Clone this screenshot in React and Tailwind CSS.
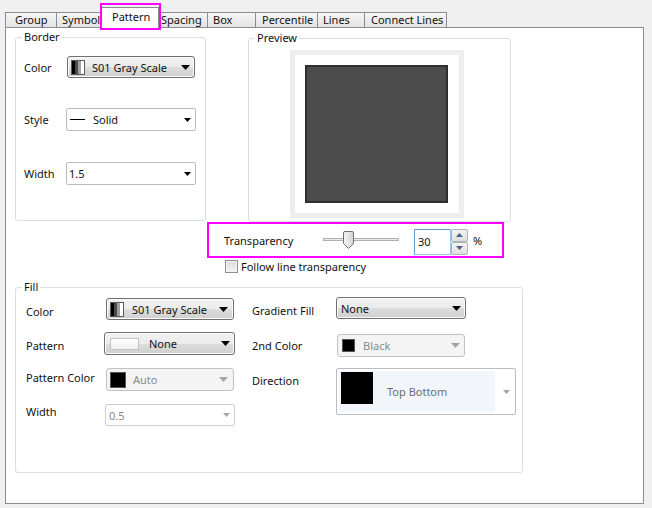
import React from "react"

const tabs = [
    { label: "Group", w: "w-[52px]", pl: "pl-[9px]" },
    { label: "Symbol", w: "w-[46px]", pl: "pl-[5px]" },
    { label: "Pattern", w: "w-[58px]", pl: "pl-[10px]", active: true },
    { label: "Spacing", w: "w-[50px]", pl: "pl-[2px]" },
    { label: "Box", w: "w-[49px]", pl: "pl-[5px]" },
    { label: "Percentile", w: "w-[63px]", pl: "pl-[6px]" },
    { label: "Lines", w: "w-[48px]", pl: "pl-[5px]" },
    { label: "Connect Lines", w: "w-[83px]", pl: "pl-[6px]" }
]

function Arrow({ disabled, big }) {
    const w = big ? 9 : 7
    const h = big ? 5 : 4
    return (
        <svg width={w} height={h} viewBox={`0 0 ${w} ${h}`} className="shrink-0">
            <path d={`M0 0H${w}L${w / 2} ${h}Z`} fill={disabled ? "#a5a5a5" : "#000"} />
        </svg>
    )
}

function SmallArrow({ up }) {
    return (
        <svg width="7" height="4" viewBox="0 0 7 4">
            <path d={up ? "M0 4H7L3.5 0Z" : "M0 0H7L3.5 4Z"} fill="#4d6185" />
        </svg>
    )
}

function GrayScaleIcon() {
    return (
        <div className="flex h-[15px] w-[14px] shrink-0 border border-[#5a5a5a]">
            <div className="w-[3px] bg-black" />
            <div className="w-[3px] bg-[#4a4a4a]" />
            <div className="w-[3px] bg-[#a0a0a0]" />
            <div className="flex-1 bg-white" />
        </div>
    )
}

function ButtonCombo({ className, children }) {
    return (
        <div
            className={`flex items-center rounded-[3px] border border-[#707070] bg-[linear-gradient(#f2f2f2_0%,#ebebeb_50%,#dddddd_51%,#cfcfcf_100%)] shadow-[inset_0_0_0_1px_#fbfbfb] ${className}`}
        >
            {children}
        </div>
    )
}

function WhiteCombo({ className, children }) {
    return (
        <div className={`flex items-center rounded-[2px] border border-[#b9bcc2] bg-white ${className}`}>
            {children}
        </div>
    )
}

function DisabledCombo({ className, children }) {
    return (
        <div className={`flex items-center rounded-[3px] border border-[#c2c2c2] bg-[#f4f4f4] ${className}`}>
            {children}
        </div>
    )
}

function Slider() {
    return (
        <div className="relative h-[18px] w-[76px] shrink-0">
            <div className="absolute left-0 right-0 top-[7px] h-[3px] border border-[#b0b0b0] bg-[#e7eaea]" />
            <svg width="11" height="18" viewBox="0 0 11 18" className="absolute left-[20px] top-0">
                <defs>
                    <linearGradient id="thumb" x1="0" y1="0" x2="1" y2="0">
                        <stop offset="0" stopColor="#f6f6f6" />
                        <stop offset="1" stopColor="#d4d4d4" />
                    </linearGradient>
                </defs>
                <path
                    d="M2 0.5H9A1.5 1.5 0 0 1 10.5 2V12.5L5.5 17.5L0.5 12.5V2A1.5 1.5 0 0 1 2 0.5Z"
                    fill="url(#thumb)"
                    stroke="#707070"
                />
            </svg>
        </div>
    )
}

function App() {
    return (
        <div className="relative h-[508px] w-[652px] overflow-hidden bg-[#f0f0f0] font-['Noto_Sans',sans-serif] text-[11px] leading-[15px] text-[#111]">
            <div className="ml-[5px] mt-[8px] flex h-[19px] items-end">
                {tabs.map((t, i) =>
                    t.active ? (
                        <div
                            key={t.label}
                            className={`relative z-10 -mb-px -ml-px flex h-[21px] ${t.w} ${t.pl} items-center border border-b-0 border-[#898c95] bg-white pb-[3px]`}
                        >
                            {t.label}
                        </div>
                    ) : (
                        <div
                            key={t.label}
                            className={`flex h-[15px] ${t.w} ${t.pl} ${i > 0 ? "-ml-px" : ""} items-center whitespace-nowrap border border-b-0 border-[#898c95] bg-[linear-gradient(#f5f5f5,#e4e4e4)] pb-[2px]`}
                        >
                            {t.label}
                        </div>
                    )
                )}
            </div>

            <div className="ml-[5px] h-[477px] w-[639px] border border-[#898c95] bg-white">
                <div className="flex items-start">
                    <fieldset className="ml-[9px] mt-[2px] h-[191px] w-[191px] rounded-[3px] border border-[#d5dfe5]">
                        <legend className="ml-[6px] px-[2px] leading-[14px]">Border</legend>
                        <div className="pl-[8px]">
                            <div className="mt-[12px] flex items-center">
                                <span className="w-[43px]">Color</span>
                                <ButtonCombo className="h-[22px] w-[128px] pl-[3px] pr-[4px]">
                                    <GrayScaleIcon />
                                    <span className="ml-[7px] flex-1">S01 Gray Scale</span>
                                    <Arrow big />
                                </ButtonCombo>
                            </div>
                            <div className="mt-[30px] flex items-center">
                                <span className="w-[42px]">Style</span>
                                <WhiteCombo className="h-[23px] w-[130px] pl-[3px] pr-[4px]">
                                    <div className="h-px w-[15px] bg-black" />
                                    <span className="ml-[8px] flex-1">Solid</span>
                                    <Arrow />
                                </WhiteCombo>
                            </div>
                            <div className="mt-[31px] flex items-center">
                                <span className="w-[42px]">Width</span>
                                <WhiteCombo className="h-[23px] w-[130px] pl-[2px] pr-[4px]">
                                    <span className="flex-1">1.5</span>
                                    <Arrow />
                                </WhiteCombo>
                            </div>
                        </div>
                    </fieldset>

                    <fieldset className="ml-[42px] mt-[3px] h-[191px] w-[263px] rounded-[3px] border border-[#d5dfe5]">
                        <legend className="ml-[6px] px-[2px] leading-[14px]">Preview</legend>
                        <div className="ml-[41px] mt-[5px] h-[168px] w-[174px] bg-[#eeeeee] p-[5px]">
                            <div className="h-full w-full bg-white pl-[10px] pt-[10px]">
                                <div className="h-[138px] w-[143px] border-2 border-[#2e2e2e] bg-[#4b4b4b]" />
                            </div>
                        </div>
                    </fieldset>
                </div>

                <div className="ml-[201px] flex h-[36px] w-[297px] items-center border-2 border-[#ff00ff] pl-[15px]">
                    <span className="w-[99px] shrink-0">Transparency</span>
                    <Slider />
                    <div className="ml-[15px] mt-[3px] flex h-[26px]">
                        <div className="flex h-full w-[37px] items-center border border-[#9ec3ea] border-l-[#5e9ad6] border-t-[#5e9ad6] bg-white pl-[3px]">
                            30
                        </div>
                        <div className="flex w-[17px] flex-col">
                            <div className="flex h-[13px] items-center justify-center rounded-[2px] border border-[#adb2b5] bg-[linear-gradient(#f4f4f4,#dedede)]">
                                <SmallArrow up />
                            </div>
                            <div className="flex h-[13px] items-center justify-center rounded-[2px] border border-[#adb2b5] bg-[linear-gradient(#f4f4f4,#dedede)]">
                                <SmallArrow />
                            </div>
                        </div>
                    </div>
                    <span className="ml-[5px]">%</span>
                </div>

                <div className="ml-[219px] mt-[1px] flex h-[14px] items-center">
                    <div className="h-[13px] w-[13px] border border-[#8f8f8f] bg-[linear-gradient(#dcdcdc,#f4f4f4)] shadow-[inset_0_0_0_1px_#f4f4f4]" />
                    <span className="ml-[3px]">Follow line transparency</span>
                </div>

                <fieldset className="ml-[9px] mt-[7px] h-[193px] w-[508px] rounded-[3px] border border-[#d5dfe5]">
                    <legend className="ml-[6px] px-[2px] leading-[14px]">Fill</legend>
                    <div className="flex items-start pl-[10px]">
                        <div className="w-[210px]">
                            <div className="mt-[4px] flex items-start">
                                <span className="mt-[6px] w-[80px]">Color</span>
                                <ButtonCombo className="h-[22px] w-[128px] pl-[3px] pr-[5px]">
                                    <GrayScaleIcon />
                                    <span className="ml-[8px] flex-1">S01 Gray Scale</span>
                                    <Arrow big />
                                </ButtonCombo>
                            </div>
                            <div className="mt-[12px] flex items-start">
                                <span className="mt-[6px] w-[80px]">Pattern</span>
                                <ButtonCombo className="-ml-[2px] h-[23px] w-[131px] pl-[5px] pr-[4px]">
                                    <div className="h-[12px] w-[29px] border border-[#c4c4c4] bg-[linear-gradient(#ffffff,#f0f0f0)]" />
                                    <span className="ml-[10px] flex-1">None</span>
                                    <Arrow big />
                                </ButtonCombo>
                            </div>
                            <div className="mt-[13px] flex items-start">
                                <span className="mt-[2px] w-[80px]">Pattern Color</span>
                                <DisabledCombo className="h-[23px] w-[128px] pl-[3px] pr-[5px]">
                                    <div className="h-[16px] w-[16px] border border-[#555] bg-black" />
                                    <span className="ml-[7px] flex-1 text-[#8a8a8a]">Auto</span>
                                    <Arrow big disabled />
                                </DisabledCombo>
                            </div>
                            <div className="mt-[13px] flex items-start">
                                <span className="w-[80px]">Width</span>
                                <div className="-ml-px flex h-[22px] w-[130px] items-center rounded-[2px] border border-[#cdcdcd] bg-white pl-[3px] pr-[4px]">
                                    <span className="flex-1 text-[#8a8a8a]">0.5</span>
                                    <Arrow disabled />
                                </div>
                            </div>
                        </div>

                        <div className="ml-[16px]">
                            <div className="mt-[3px] flex items-start">
                                <span className="mt-[6px] w-[84px]">Gradient Fill</span>
                                <ButtonCombo className="h-[22px] w-[130px] pl-[4px] pr-[4px]">
                                    <span className="flex-1">None</span>
                                    <Arrow big />
                                </ButtonCombo>
                            </div>
                            <div className="mt-[15px] flex items-start">
                                <span className="mt-[4px] w-[84px]">2nd Color</span>
                                <DisabledCombo className="ml-px h-[23px] w-[128px] pl-[4px] pr-[4px]">
                                    <div className="h-[13px] w-[13px] border border-[#555] bg-black" />
                                    <span className="ml-[8px] flex-1 text-[#8a8a8a]">Black</span>
                                    <Arrow big disabled />
                                </DisabledCombo>
                            </div>
                            <div className="mt-[11px] flex items-start">
                                <span className="mt-[5px] w-[84px]">Direction</span>
                                <div className="flex h-[47px] w-[180px] items-center rounded-[2px] border border-[#b9bcc2] bg-white p-[2px]">
                                    <div className="flex h-[41px] w-[156px] items-center bg-[#f2f5fa]">
                                        <div className="ml-[2px] mt-[1px] h-[32px] w-[32px] self-start bg-black" />
                                        <span className="ml-[14px] text-[#6e6e6e]">Top Bottom</span>
                                    </div>
                                    <div className="ml-[8px]">
                                        <Arrow disabled />
                                    </div>
                                </div>
                            </div>
                        </div>
                    </div>
                </fieldset>
            </div>

            <div className="pointer-events-none absolute left-[100px] top-[3px] z-20 h-[27px] w-[61px] border-2 border-[#ff00ff]" />
        </div>
    )
}

export default App
